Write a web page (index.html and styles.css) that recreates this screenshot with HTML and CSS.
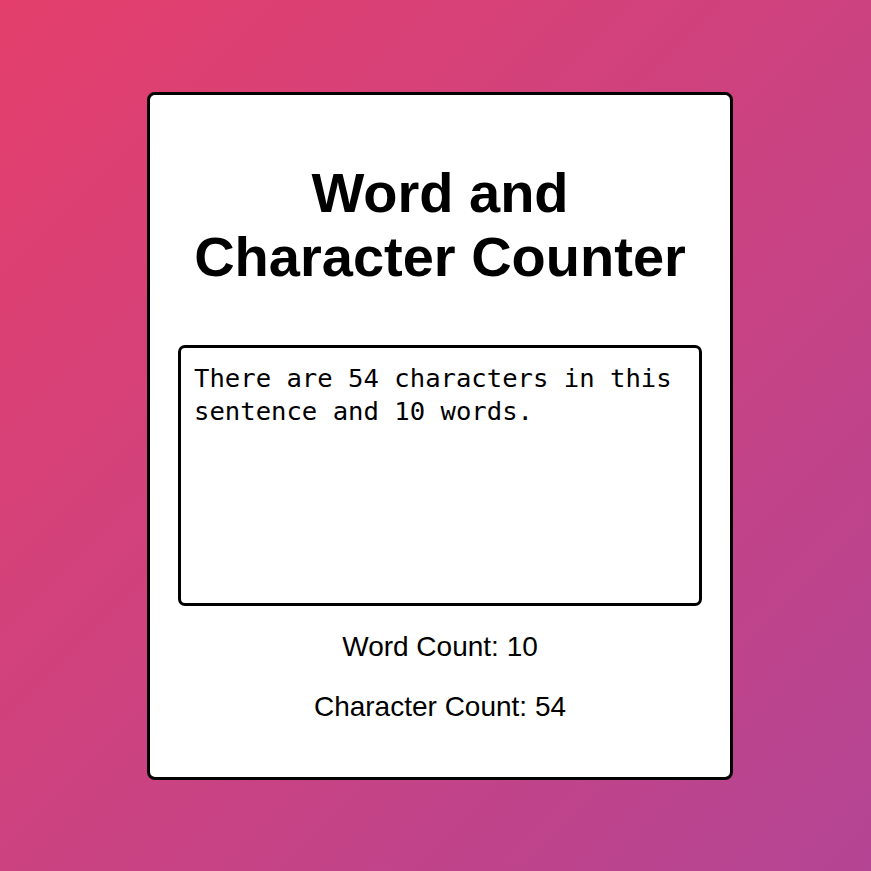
FILE: index.html
```html
<!DOCTYPE html>
<html>
<head>
<meta charset="utf-8">
<link rel="stylesheet" href="styles.css">
</head>
<body>
<div class="card">
  <h1 class="title">Word and Character Counter</h1>
  <textarea class="input">There are 54 characters in this sentence and 10 words.</textarea>
  <p class="count">Word Count: 10</p>
  <p class="count">Character Count: 54</p>
</div>
</body>
</html>
```
FILE: styles.css
```css
html, body {
  margin: 0;
  height: 100%;
}
body {
  background: linear-gradient(135deg, #e43f6c 0%, #b44594 100%);
  display: flex;
  align-items: center;
  justify-content: center;
  padding-left: 9px;
  box-sizing: border-box;
  font-family: "Liberation Sans", Arial, sans-serif;
}
.card {
  width: 586px;
  box-sizing: border-box;
  background: #fff;
  border: 3px solid #000;
  border-radius: 8px;
  padding: 28px 28px 27px;
  display: flex;
  flex-direction: column;
  align-items: center;
}
.title {
  font-size: 56px;
  font-weight: bold;
  text-align: center;
  margin: 38px 0 55px;
  line-height: 64.5px;
}
.input {
  width: 524px;
  height: 261px;
  box-sizing: border-box;
  border: 3px solid #000;
  border-radius: 7px;
  padding: 14px 13px;
  font-family: "DejaVu Sans Mono", monospace;
  font-size: 25.6px;
  line-height: 33px;
  resize: none;
  color: #000;
  outline: none;
}
.count {
  font-size: 28px;
  margin: 25px 0 0;
  line-height: 32px;
}
.count + .count {
  margin-top: 28px;
  margin-bottom: 27px;
}
```
